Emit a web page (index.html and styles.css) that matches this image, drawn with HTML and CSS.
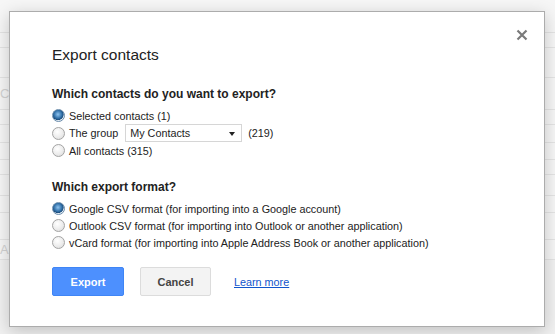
FILE: index.html
```html
<!DOCTYPE html>
<html lang="en">
<head>
  <meta charset="UTF-8">
  <title>Export contacts</title>
  <link rel="stylesheet" href="styles.css">
</head>
<body>
  <div class="backdrop">
    <div class="bg-row r33"></div>
    <div class="bg-row r15"></div>
    <div class="bg-row r30"></div>
    <div class="bg-row r32"><span class="bg-text">Ch</span></div>
    <div class="bg-row r15"></div>
    <div class="bg-row r18"></div>
    <div class="bg-row r17"></div>
    <div class="bg-row r15"></div>
    <div class="bg-row r21"></div>
    <div class="bg-row r17"></div>
    <div class="bg-row r27"></div>
    <div class="bg-row r20"><span class="bg-text">Ad</span></div>
  </div>

  <div class="dialog">
    <svg class="close" width="12" height="12" viewBox="0 0 12 12">
      <path d="M1.5 1.5 L10.5 10.5 M10.5 1.5 L1.5 10.5" stroke="#7a7a7a" stroke-width="2.2" fill="none"/>
    </svg>

    <h1 class="title">Export contacts</h1>

    <h2 class="question first">Which contacts do you want to export?</h2>
    <label class="opt"><input type="radio" name="who" checked> Selected contacts (1)</label>
    <label class="opt opt-group"><input type="radio" name="who"> The group
      <span class="select">My Contacts<span class="arrow"></span></span>
      (219)
    </label>
    <label class="opt"><input type="radio" name="who"> All contacts (315)</label>

    <h2 class="question">Which export format?</h2>
    <label class="opt"><input type="radio" name="fmt" checked> Google CSV format (for importing into a Google account)</label>
    <label class="opt"><input type="radio" name="fmt"> Outlook CSV format (for importing into Outlook or another application)</label>
    <label class="opt"><input type="radio" name="fmt"> vCard format (for importing into Apple Address Book or another application)</label>

    <div class="actions">
      <button class="btn btn-blue">Export</button>
      <button class="btn btn-gray">Cancel</button>
      <a href="#" class="learn">Learn more</a>
    </div>
  </div>
</body>
</html>
```

FILE: styles.css
```css
html, body { margin: 0; height: 100%; }
body { font-family: "Liberation Sans", Arial, sans-serif; font-size: 10.8px; color: #222; background: #f1f1f1; overflow: hidden; position: relative; }

.backdrop { background: #f6f6f6; }
.bg-row { box-sizing: border-box; border-bottom: 1px solid #e4e4e4; color: #d2d2d2; font-size: 13px; display: flex; align-items: center; }
.r15 { height: 15px; }
.r17 { height: 17px; }
.r18 { height: 18px; }
.r20 { height: 20px; }
.r21 { height: 21px; }
.r27 { height: 27px; }
.r30 { height: 30px; }
.r32 { height: 32px; }
.r33 { height: 33px; }
.bg-text { padding-left: 0; }

.dialog { position: absolute; left: 9px; top: 11px; width: 450px; height: 252px; padding: 32px 42px 30px; background: #fff; border: 1px solid #acacac; box-shadow: 0 4px 16px rgba(0,0,0,0.2); }
.close { position: absolute; right: 16px; top: 17px; }

.title { margin: 0; font-size: 15.5px; font-weight: normal; line-height: 21px; color: #222; }
.question { margin: 20px 0 5px; font-size: 12px; font-weight: bold; line-height: 16px; }
.question.first { margin-top: 21px; }

.opt { display: flex; align-items: center; height: 17px; white-space: nowrap; }
.opt-group { height: 18px; }
.opt input { appearance: none; -webkit-appearance: none; margin: 0 4px 0 0; width: 13px; height: 13px; border-radius: 50%; border: 1px solid #a4a4a4; background: radial-gradient(circle at 40% 35%, #ffffff 0%, #ececec 55%, #d6d6d6 100%); box-sizing: border-box; }
.opt input:checked { border-color: #6a8cab; background: radial-gradient(circle at 45% 40%, #8ec3ef 0%, #2f6ea6 45%, #1e4f7e 60%, #dfe9f2 66%, #f2f6fa 100%); }

.select { display: inline-flex; align-items: center; justify-content: space-between; margin: 0 6px 0 7px; width: 107px; height: 16px; padding: 0 4px; border: 1px solid #d6d6d6; }
.arrow { width: 0; height: 0; border-left: 3.5px solid transparent; border-right: 3.5px solid transparent; border-top: 4px solid #222; margin-right: 2px; margin-top: 2px; }

.actions { display: flex; align-items: center; margin-top: 16px; }
.btn { height: 29px; padding: 0; border-radius: 2px; font-family: inherit; font-size: 11px; font-weight: bold; }
.btn-blue { width: 72px; background: #4d90fe; border: 1px solid #3f85f5; color: #fff; }
.btn-gray { width: 71px; margin-left: 16px; background: #f3f3f3; border: 1px solid #dcdcdc; color: #444; }
.learn { margin-left: 23px; color: #15c; }
```
